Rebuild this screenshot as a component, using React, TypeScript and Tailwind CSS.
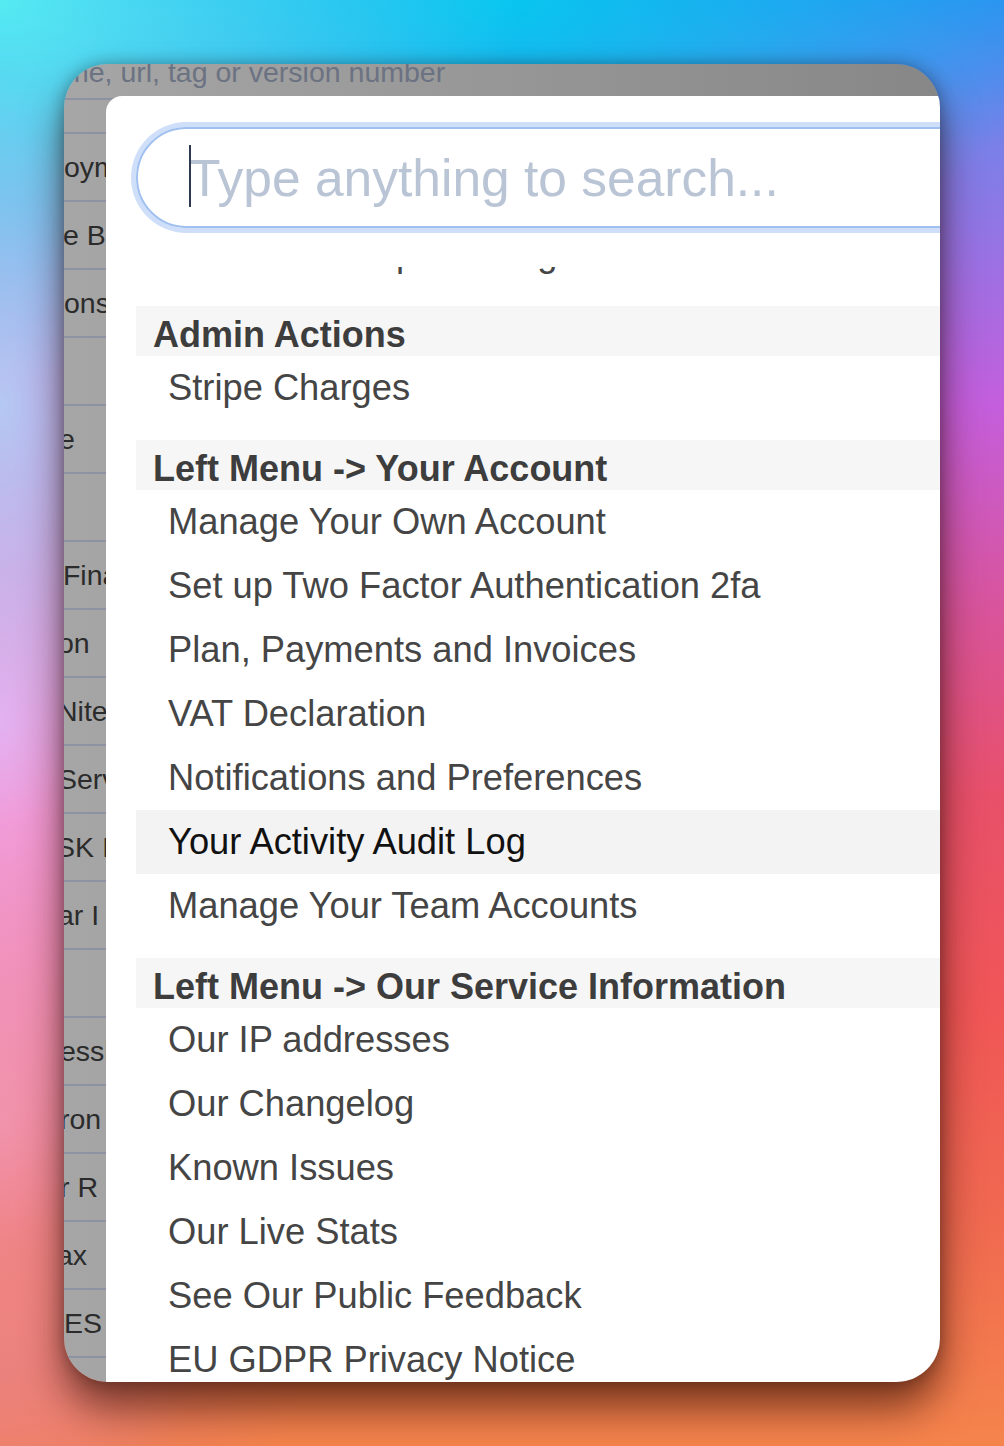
type PageRow = { text: string; shift: string };

// rows of the dimmed page that peek out left of the command palette
const pageRows: PageRow[] = [
  { text: "oyment Settings", shift: "ml-0" },
  { text: "e Builds", shift: "-ml-[1px]" },
  { text: "ons Log", shift: "ml-0" },
  { text: "", shift: "ml-0" },
  { text: "e", shift: "-ml-[5px]" },
  { text: "", shift: "ml-0" },
  { text: " Finance", shift: "-ml-[9px]" },
  { text: "on", shift: "-ml-[6px]" },
  { text: "Nite", shift: "-ml-[7px]" },
  { text: "Serv", shift: "-ml-[6px]" },
  { text: "SK I", shift: "-ml-[8px]" },
  { text: "ar I", shift: "-ml-[6px]" },
  { text: "", shift: "ml-0" },
  { text: "essl", shift: "-ml-[4px]" },
  { text: "ron", shift: "-ml-[4px]" },
  { text: "r R", shift: "-ml-[4px]" },
  { text: "ax", shift: "-ml-[7px]" },
  { text: "ES", shift: "ml-0" },
  { text: "", shift: "ml-0" },
];

type Section = { title?: string; items: string[] };

const sections: Section[] = [
  { items: ["Cron Status Update Log"] },
  { title: "Admin Actions", items: ["Stripe Charges"] },
  {
    title: "Left Menu -> Your Account",
    items: [
      "Manage Your Own Account",
      "Set up Two Factor Authentication 2fa",
      "Plan, Payments and Invoices",
      "VAT Declaration",
      "Notifications and Preferences",
      "Your Activity Audit Log",
      "Manage Your Team Accounts",
    ],
  },
  {
    title: "Left Menu -> Our Service Information",
    items: [
      "Our IP addresses",
      "Our Changelog",
      "Known Issues",
      "Our Live Stats",
      "See Our Public Feedback",
      "EU GDPR Privacy Notice",
      "Terms of Service",
    ],
  },
];

const activeItem = "Your Activity Audit Log";

export default function App() {
  return (
    <div className="h-[1446px] w-full overflow-hidden pl-[64px] pt-[64px] font-['Liberation_Sans',Arial,sans-serif] [background-image:radial-gradient(ellipse_520px_380px_at_0%_0%,#55eaf2_0%,rgba(85,234,242,0)_100%),radial-gradient(ellipse_560px_300px_at_50%_0%,#08c6ef_0%,rgba(8,198,239,0)_100%),radial-gradient(ellipse_260px_420px_at_0%_28%,#b4c8f2_0%,rgba(180,200,242,0)_100%),radial-gradient(ellipse_260px_520px_at_0%_50%,#f2aaf0_0%,rgba(242,170,240,0)_100%),radial-gradient(ellipse_260px_420px_at_0%_78%,#f08c98_0%,rgba(240,140,152,0)_100%),radial-gradient(ellipse_300px_200px_at_0%_95%,#e87a6a_0%,rgba(232,122,106,0)_100%),linear-gradient(to_bottom,#2f8ff0_0%,#7a80e8_10%,#c45edc_28%,#d8549c_42%,#e8506a_55%,#f05656_70%,#f06a50_85%,#f5844c_100%)]">
      <div className="relative h-[1318px] w-[876px] overflow-hidden rounded-[44px] bg-[linear-gradient(to_right,#a6a6a6,#878787)] shadow-[0_26px_40px_rgba(40,10,0,0.6),0_0_16px_rgba(0,0,0,0.3)]">
        {/* dimmed page behind the palette */}
        <div className="flex h-[36px] items-start border-b-2 border-[#8e93a3]">
          <p className="-mt-[6px] ml-[1px] whitespace-nowrap text-[28.5px] leading-[28px] text-[#6b7282]">
            me, url, tag or version number
          </p>
        </div>
        <div className="h-[34px] border-b-2 border-[#8e93a3]" />
        {pageRows.map((row, i) => (
          <div key={i} className="flex h-[68px] items-center border-b-2 border-[#8e93a3]">
            <span className={`whitespace-pre text-[28.5px] leading-none text-[#2b2b2b] ${row.shift}`}>{row.text}</span>
          </div>
        ))}

        {/* command palette */}
        <div className="absolute left-[42px] top-[32px] h-[1400px] w-[1000px] rounded-tl-[16px] bg-white pl-[30px] pt-[31px]">
          <div className="relative h-[101px] w-[900px] rounded-full border-2 border-[#a0c0f0] shadow-[0_0_0_5px_#cfdffa]">
            <span className="absolute left-[51px] top-[16px] h-[62px] w-[2px] bg-[#2d3a4f]" />
            <input
              readOnly
              placeholder="Type anything to search..."
              className="h-full w-full bg-transparent pl-[51px] text-[51.5px] text-[#333] caret-transparent outline-none placeholder:text-[#b9c4d5]"
            />
          </div>

          <div className="mt-[39px] h-[1200px] overflow-hidden">
            <div className="-mt-[45px]">
              {sections.map((section, si) => (
                <div key={si} className={si === 0 ? "" : "mt-[20px]"}>
                  {section.title && (
                    <div className="h-[50px] whitespace-nowrap bg-[#f6f6f6] pl-[17px] pt-[9px] text-[36px] font-bold leading-[40px] text-[#3d3d3d]">
                      {section.title}
                    </div>
                  )}
                  {section.items.map((item) => (
                    <div
                      key={item}
                      className={
                        item === activeItem
                          ? "h-[64px] whitespace-nowrap bg-[#f3f3f3] pl-[32px] text-[36.3px] leading-[63px] text-[#111]"
                          : "h-[64px] whitespace-nowrap pl-[32px] text-[36.3px] leading-[63px] text-[#454545]"
                      }
                    >
                      {item}
                    </div>
                  ))}
                </div>
              ))}
            </div>
          </div>
        </div>
      </div>
    </div>
  );
}
